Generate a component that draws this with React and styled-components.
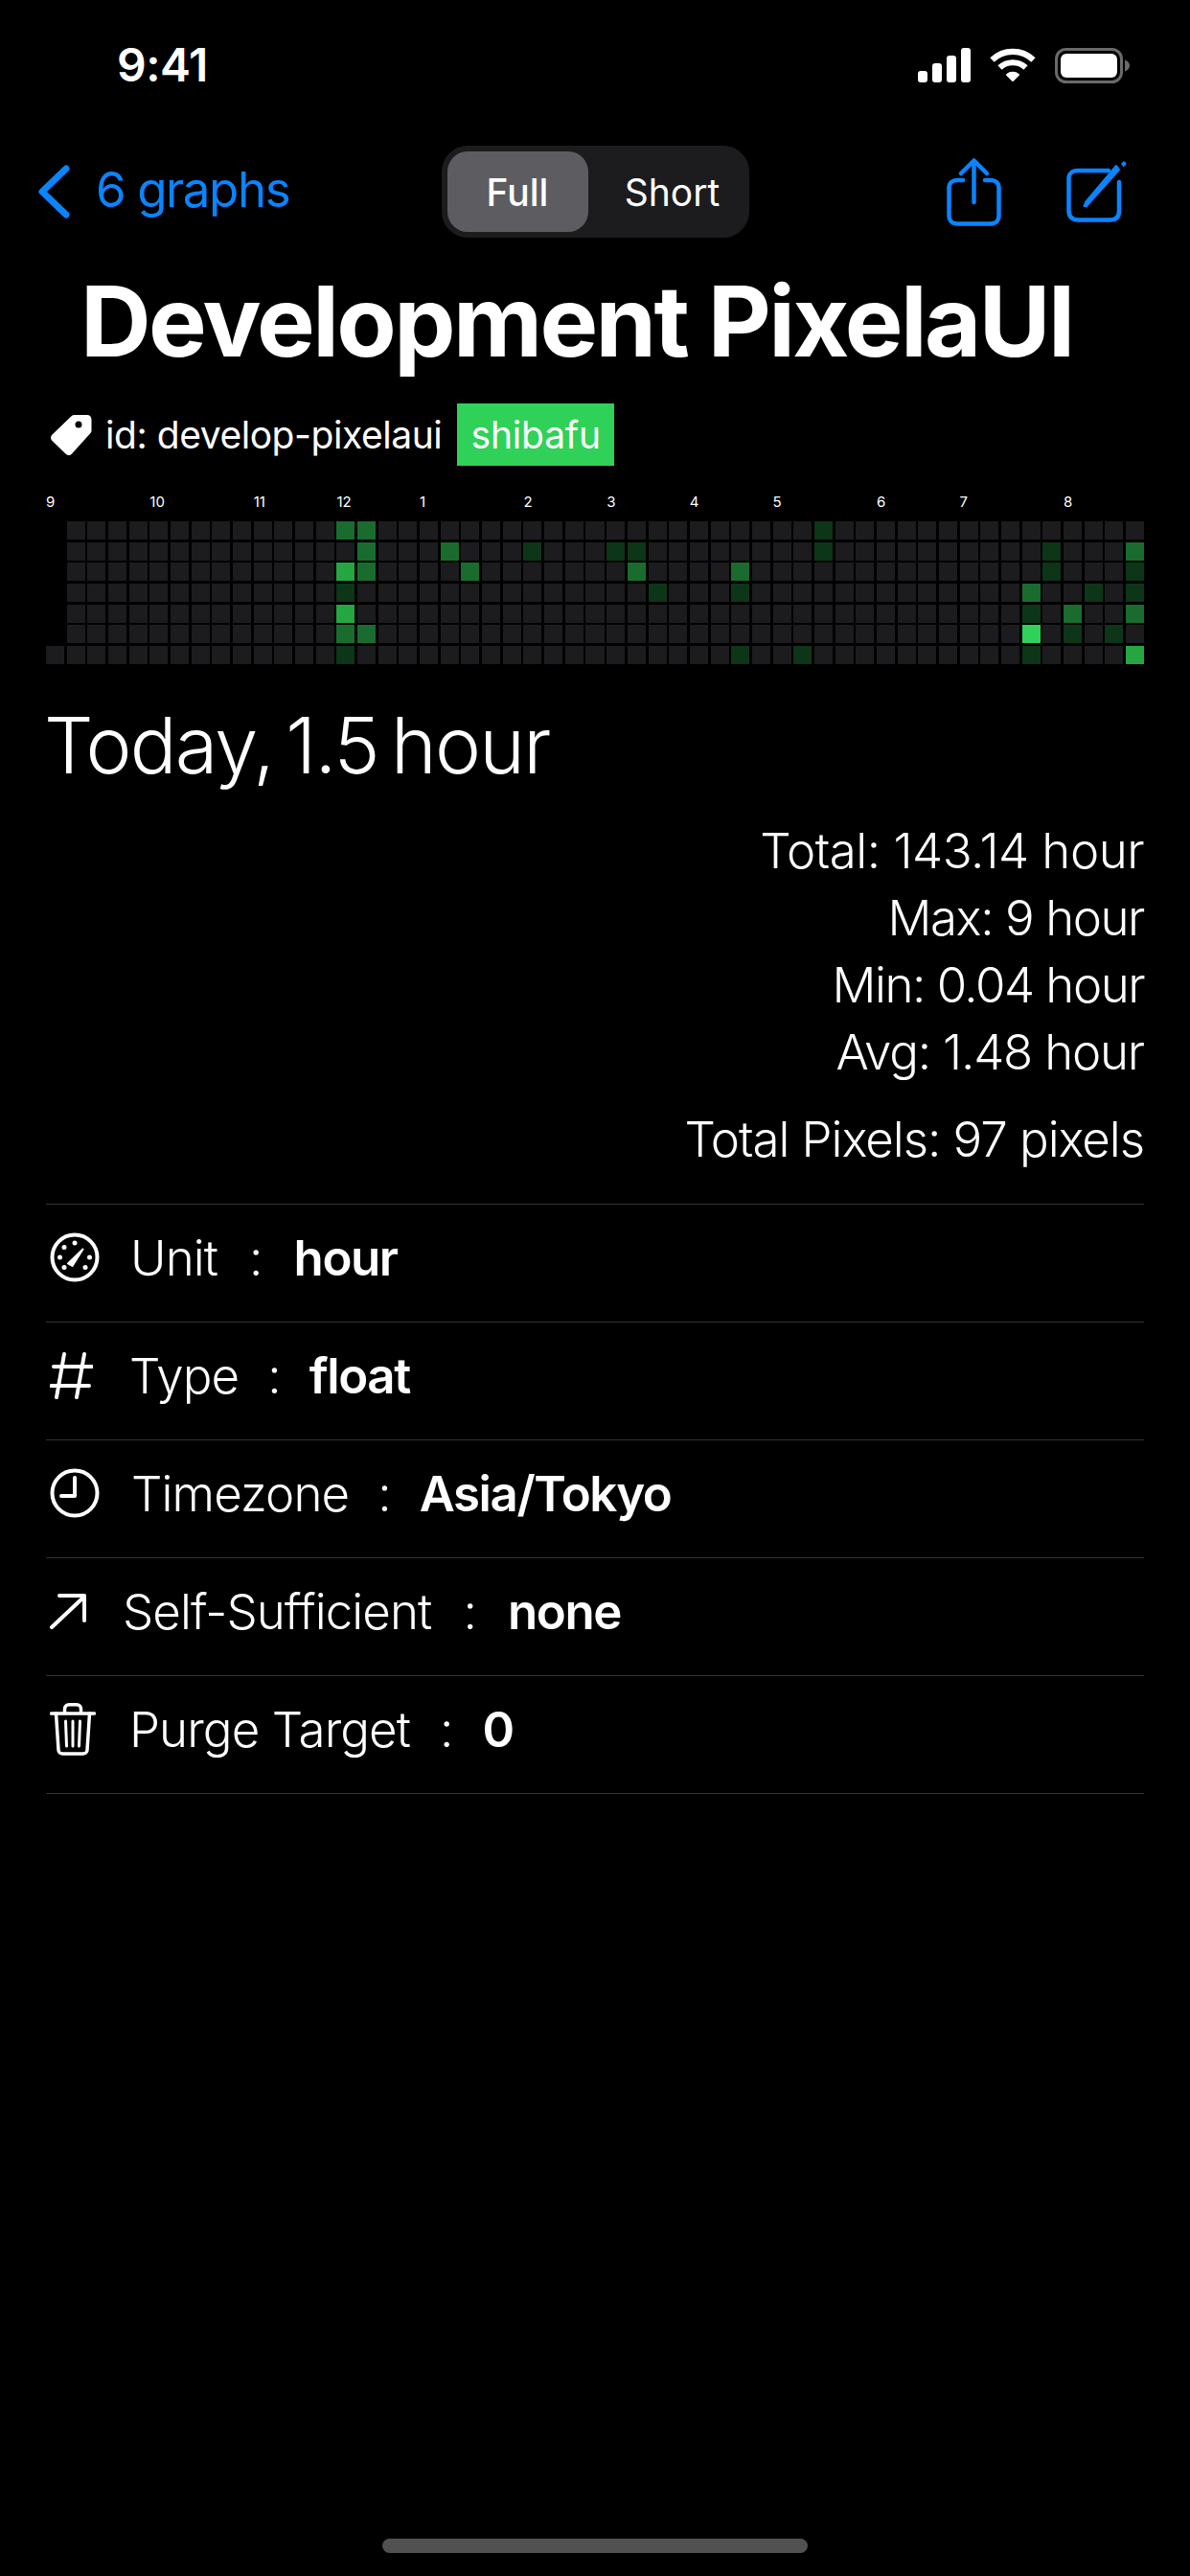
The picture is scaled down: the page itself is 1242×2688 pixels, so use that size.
import React from "react";
import styled, { createGlobalStyle } from "styled-components";

const Global = createGlobalStyle`
  html, body { margin: 0; padding: 0; background: #000; }
  * { box-sizing: border-box; }
`;

const Page = styled.div`
  width: 1242px; height: 2688px; background: #000; color: #fff;
  font-family: Inter, "Noto Sans", sans-serif;
  display: flex; flex-direction: column; overflow: hidden;
`;
const StatusBar = styled.div`
  height: 136px; display: flex; align-items: center; justify-content: space-between;
  padding: 0 63px 0 122px;
`;
const Time = styled.span`
  font-size: 48px; font-weight: 600; letter-spacing: -0.5px; line-height: 1;
`;
const StatusIcons = styled.div`
  display: flex; align-items: center; gap: 20px;
`;
const NavBar = styled.div`
  height: 128px; display: grid; grid-template-columns: 1fr auto 1fr; align-items: center;
`;
const Back = styled.div`
  margin-left: 40px; display: flex; align-items: center; gap: 27px; color: #0a84ff;
  font-size: 51px; letter-spacing: -1.4px; line-height: 1;
  span { position: relative; top: -3px; }
`;
const Segment = styled.div`
  width: 321px; height: 96px; background: #1c1c1e; border-radius: 27px; padding: 6px;
  display: flex; align-items: stretch;
`;
const SegmentItem = styled.div`
  display: flex; align-items: center; justify-content: center;
  width: ${p => p.$w}px; border-radius: 21px; font-size: 39px; line-height: 1;
  padding-left: ${p => (p.$on ? 0 : 14)}px;
  background: ${p => (p.$on ? "#5d5d61" : "transparent")};
  font-weight: ${p => (p.$on ? 500 : 400)};
`;
const NavActions = styled.div`
  margin-right: 66px; display: flex; justify-content: flex-end; align-items: center; gap: 68px;
`;
const Title = styled.h1`
  margin: 9px 0 0; padding-left: 84px; font-size: 102px; font-weight: 700; line-height: 124px;
  letter-spacing: -2.6px; white-space: nowrap;
`;
const TagRow = styled.div`
  margin-top: 24px; padding-left: 52px; height: 65px; display: flex; align-items: center;
`;
const TagText = styled.span`
  margin-left: 13px; font-size: 39px; letter-spacing: -0.45px; line-height: 1;
`;
const Badge = styled.span`
  margin-left: 16px; height: 65px; width: 164px; display: flex; align-items: center; justify-content: center;
  background: #30d158; font-size: 39px; letter-spacing: -0.2px;
`;
const Chart = styled.section`
  margin: 22px 48px 0; display: flex; flex-direction: column;
`;
const Months = styled.div`
  display: grid; grid-template-columns: repeat(53, 1fr); column-gap: 2.68px; height: 30px; align-items: center;
  font-size: 15px; line-height: 1;
`;
const Month = styled.span`
  grid-column: ${p => p.$col + 1} / span 3; grid-row: 1; white-space: nowrap;
`;
const Cells = styled.div`
  margin-top: 6px; height: 149px; display: grid; grid-template-columns: repeat(53, 1fr);
  grid-template-rows: repeat(7, 1fr); grid-auto-flow: column; gap: 2.7px 2.68px;
`;
const levels = ["#1c1c1e", "#0d3518", "#196c2e", "#26a641", "#30d158"];
const Cell = styled.div`
  background: ${p => (p.$level < 0 ? "transparent" : levels[p.$level])};
`;
const Today = styled.div`
  margin: 35px 48px 0 46px; font-size: 81px; line-height: 100px; font-weight: 300;
  letter-spacing: -1.7px; word-spacing: -8px;
`;
const Stats = styled.div`
  margin: 24px 48px 0; display: flex; flex-direction: column; align-items: flex-end;
`;
const StatLine = styled.div`
  height: 70px; display: flex; align-items: center; font-size: 51px; white-space: pre;
  letter-spacing: ${p => p.$track}px; font-weight: 350;
`;
const PixelsLine = styled(StatLine)`
  margin-top: 21px; height: 70px;
`;
const List = styled.div`
  margin: 33px 48px 0; border-top: 1.5px solid #333335;
`;
const Row = styled.div`
  height: 123px; border-bottom: 1.5px solid #333335; display: flex; align-items: center;
  padding: 0 0 12px 4px; font-size: 51px; letter-spacing: -0.9px; white-space: pre; font-weight: 350;
`;
const IconBox = styled.span`
  width: ${p => p.$w}px; margin-right: ${p => p.$gap}px; display: flex; flex-shrink: 0;
`;
const Colon = styled.span`
  margin: 0 ${p => p.$m}px;
`;
const Value = styled.span`
  font-weight: 600; letter-spacing: -1.4px;
`;
const HomeBar = styled.div`
  margin: auto auto 24px; width: 444px; height: 15px; border-radius: 8px; background: #515151;
`;

const green = {
  "14": { 0: 2, 2: 3, 3: 1, 4: 3, 5: 2, 6: 1 },
  "15": { 0: 2, 1: 2, 2: 2, 5: 2 },
  "19": { 1: 2 },
  "20": { 2: 2 },
  "23": { 1: 1 },
  "27": { 1: 1 },
  "28": { 1: 1, 2: 2 },
  "29": { 3: 1 },
  "33": { 2: 2, 3: 1, 6: 1 },
  "36": { 6: 1 },
  "37": { 0: 1, 1: 1 },
  "47": { 3: 2, 4: 1, 5: 4, 6: 1 },
  "48": { 1: 1, 2: 1 },
  "49": { 4: 2, 5: 1 },
  "50": { 3: 1 },
  "51": { 5: 1 },
  "52": { 1: 2, 2: 1, 3: 1, 4: 2, 6: 3 },
};
const months = [["9", 0], ["10", 5], ["11", 10], ["12", 14], ["1", 18], ["2", 23], ["3", 27], ["4", 31], ["5", 35], ["6", 40], ["7", 44], ["8", 49]];

const cells = [];
for (let c = 0; c < 53; c++) {
  for (let r = 0; r < 7; r++) {
    const lvl = c === 0 && r < 6 ? -1 : (green[c] && green[c][r]) || 0;
    cells.push(<Cell key={`${c}-${r}`} $level={lvl} />);
  }
}

const Signal = () => (
  <svg width="55" height="36" viewBox="0 0 55 36" fill="#fff">
    <rect x="0" y="24" width="10" height="12" rx="3" />
    <rect x="15" y="16" width="10" height="20" rx="3" />
    <rect x="30" y="8" width="10" height="28" rx="3" />
    <rect x="45" y="0" width="10" height="36" rx="3" />
  </svg>
);
const Wifi = () => (
  <svg width="48" height="36" viewBox="0 0 48 36" fill="none" stroke="#fff" strokeWidth="6.2">
    <path d="M2.5 12.5C14.5 1 33.5 1 45.5 12.5" />
    <path d="M10.5 20.5C18 13.5 30 13.5 37.5 20.5" />
    <path d="M18 28C21.5 25 26.5 25 30 28L24 34Z" fill="#fff" strokeWidth="2" strokeLinejoin="round" />
  </svg>
);
const Battery = () => (
  <svg width="78" height="37" viewBox="0 0 78 37">
    <rect x="1.5" y="1.5" width="68" height="34" rx="10" fill="none" stroke="#6a6a6a" strokeWidth="3" />
    <rect x="6" y="6" width="59" height="25" rx="6" fill="#fff" />
    <path d="M73 12.5C76 13.5 78 15.5 78 18.5S76 23.5 73 24.5Z" fill="#6a6a6a" />
  </svg>
);
const Chevron = () => (
  <svg width="33" height="56" viewBox="0 0 33 56" fill="none" stroke="#0a84ff" strokeWidth="7" strokeLinecap="round" strokeLinejoin="round">
    <path d="M29 4 4 28l25 24" />
  </svg>
);
const Share = () => (
  <svg width="57" height="71" viewBox="0 0 57 71" fill="none" stroke="#0a84ff" strokeWidth="4.5" strokeLinecap="round" strokeLinejoin="round">
    <path d="M17 23H11C6 23 2.5 26 2.5 31V60C2.5 65 6 68.5 11 68.5H46C51 68.5 54.5 65 54.5 60V31C54.5 26 51 23 46 23H40" />
    <path d="M28.5 46V3M15 16 28.5 2.5 42 16" />
  </svg>
);
const Compose = () => (
  <svg width="63" height="64" viewBox="0 0 63 64" fill="none">
    <path d="M44 10H12C6 10 2.5 13.5 2.5 18V52C2.5 58 6 61.5 12 61.5H46C52 61.5 55 58 55 52V22" stroke="#0a84ff" strokeWidth="4.5" strokeLinecap="round" />
    <path d="M55 9 21 47l-2.5 0 1.500-4 32-38Z" fill="#0a84ff" stroke="#0a84ff" strokeWidth="2" strokeLinejoin="round" />
    <path d="M57 2.500 59 1c1-.7 2.500-.5 3 .6s.3 2.200-.6 3L59.500 6.500Z" fill="#0a84ff" />
  </svg>
);
const Tag = () => (
  <svg width="45" height="45" viewBox="0 0 45 45">
    <path fillRule="evenodd" fill="#fff" d="M26 2H39C41.500 2 43.500 4 43.500 6.500V18C43.500 19.500 43 20.500 42 21.500L23 42.500C21 44.500 18.500 44.500 16.500 42.500L2.500 29C.5 27 .5 24.500 2.500 22.500L22.500 3.300C23.500 2.400 24.500 2 26 2ZM30 8.500A3.500 3.500 0 1 0 30 15.500A3.500 3.500 0 1 0 30 8.500Z" />
  </svg>
);
const Gauge = () => (
  <svg width="52" height="52" viewBox="0 0 52 52" fill="none" stroke="#fff">
    <circle cx="26" cy="26" r="23.500" strokeWidth="4" />
    <path d="M19 32.500 34.500 17.500 23.500 35Z" fill="#fff" strokeWidth="2" strokeLinejoin="round" />
    <g fill="#fff" stroke="none">
      <circle cx="26" cy="11" r="2.500" /><circle cx="15" cy="15.500" r="2.500" /><circle cx="10.500" cy="26" r="2.500" />
      <circle cx="15" cy="36.500" r="2.500" /><circle cx="37" cy="36.500" r="2.500" /><circle cx="41.500" cy="26" r="2.500" />
    </g>
  </svg>
);
const Hash = () => (
  <svg width="45" height="49" viewBox="0 0 45 49" fill="none" stroke="#fff" strokeWidth="4" strokeLinecap="round">
    <path d="M15 2 7 47M36 2 28 47M4 15H44M1.500 35H41" />
  </svg>
);
const Clock = () => (
  <svg width="52" height="52" viewBox="0 0 52 52" fill="none" stroke="#fff" strokeWidth="4" strokeLinecap="round" strokeLinejoin="round">
    <circle cx="26" cy="26" r="23.500" />
    <path d="M26 10V29H12" />
  </svg>
);
const Arrow = () => (
  <svg width="38" height="37" viewBox="0 0 38 37" fill="none" stroke="#fff" strokeWidth="4" strokeLinecap="round" strokeLinejoin="round">
    <path d="M2 35 36 3M10 2H36V28" />
  </svg>
);
const Trash = () => (
  <svg width="48" height="55" viewBox="0 0 48 55" fill="none" stroke="#fff" strokeWidth="3.500" strokeLinecap="round" strokeLinejoin="round">
    <path d="M1.500 11H46.500M15.500 10V6.500C15.500 3.500 17.500 1.800 20 1.800H28C30.500 1.800 32.500 3.500 32.500 6.500V10" />
    <path d="M6.500 11 9 49C9 51.500 11 53 13.500 53H34.500C37 53 39 51.500 39 49L41.500 11" />
    <path d="M16.500 19 17.500 45M24 19V45M31.500 19 30.500 45" strokeWidth="3" />
  </svg>
);

const rows = [
  { icon: <Gauge />, w: 52, gap: 32, label: "Unit", value: "hour", m: 33 },
  { icon: <Hash />, w: 45, gap: 38, label: "Type", value: "float", m: 30 },
  { icon: <Clock />, w: 52, gap: 33, label: "Timezone", value: "Asia/Tokyo", m: 30 },
  { icon: <Arrow />, w: 38, gap: 38, label: "Self-Sufficient", value: "none", m: 33 },
  { icon: <Trash />, w: 48, gap: 35, label: "Purge Target", value: "0", m: 31 },
];

export default function App() {
  return (
    <Page>
      <Global />
      <StatusBar>
        <Time>9:41</Time>
        <StatusIcons><Signal /><Wifi /><Battery /></StatusIcons>
      </StatusBar>
      <NavBar>
        <Back><Chevron /><span>6 graphs</span></Back>
        <Segment>
          <SegmentItem $on $w={147}>Full</SegmentItem>
          <SegmentItem $w={162}>Short</SegmentItem>
        </Segment>
        <NavActions><Share /><Compose /></NavActions>
      </NavBar>
      <Title>Development PixelaUI</Title>
      <TagRow>
        <Tag />
        <TagText>id: develop-pixelaui</TagText>
        <Badge>shibafu</Badge>
      </TagRow>
      <Chart>
        <Months>{months.map(([m, c]) => <Month key={m} $col={c}>{m}</Month>)}</Months>
        <Cells>{cells}</Cells>
      </Chart>
      <Today>Today, 1.5 hour</Today>
      <Stats>
        <StatLine $track={-0.5}>Total: 143.14 hour</StatLine>
        <StatLine $track={-1.45}>Max: 9 hour</StatLine>
        <StatLine $track={-1.5}>Min: 0.04 hour</StatLine>
        <StatLine $track={-1.2}>Avg: 1.48 hour</StatLine>
        <PixelsLine $track={-1.05}>Total Pixels: 97 pixels</PixelsLine>
      </Stats>
      <List>
        {rows.map(r => (
          <Row key={r.label}>
            <IconBox $w={r.w} $gap={r.gap}>{r.icon}</IconBox>
            <span>{r.label}</span>
            <Colon $m={r.m}>:</Colon>
            <Value>{r.value}</Value>
          </Row>
        ))}
      </List>
      <HomeBar />
    </Page>
  );
}
